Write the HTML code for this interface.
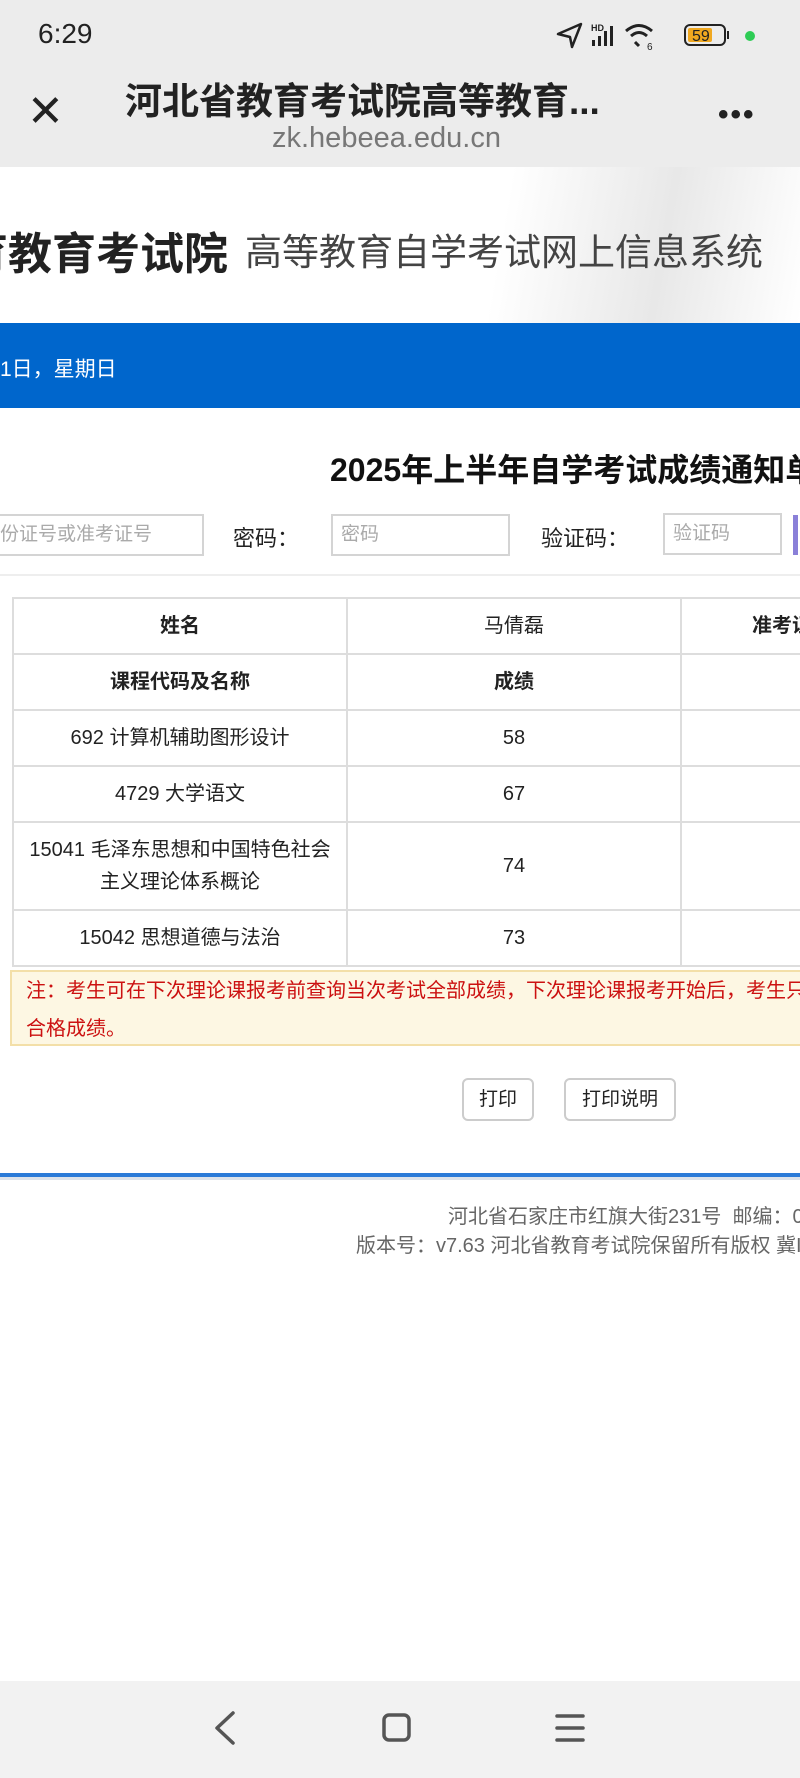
<!DOCTYPE html>
<html><head><meta charset="utf-8"><style>
*{margin:0;padding:0;box-sizing:border-box}
html,body{width:800px;height:1778px;overflow:hidden;background:#fff;font-family:"Liberation Sans","Noto Sans CJK SC",sans-serif;position:relative}
.a{position:absolute;white-space:nowrap}
.top{left:0;top:0;width:800px;height:167px;background:#ececec}
.wrap{position:absolute;left:12px;top:597px;width:1002px;overflow:visible}
.tbl{border-collapse:collapse;font-size:20px;color:#222;table-layout:fixed;width:1002px}
.tbl td{border:2px solid #ddd;text-align:center;width:334px;height:56px;white-space:nowrap;line-height:28px;vertical-align:middle}
.tbl td.b{font-weight:bold}
.inp{border:2px solid #d4d4d4;height:42px;color:#aaa;font-size:19px;line-height:38px;padding-left:8px;background:#fff}
.btn{border:2px solid #ccc;border-radius:6px;height:43px;line-height:39px;text-align:center;font-size:19px;color:#222;background:#fff}
</style></head><body>
<div class="a top"></div>
<div class="a" style="left:38px;top:18px;font-size:28px;color:#222">6:29</div>
<svg class="a" style="left:555px;top:20px" width="200" height="32" viewBox="0 0 200 32">
<path d="M3 14 L26 4 L17 27 L15 17 Z" fill="none" stroke="#222" stroke-width="2.5" stroke-linejoin="round"/>
<text x="36" y="11" font-size="9" font-weight="bold" fill="#222" font-family="Liberation Sans">HD</text>
<rect x="37" y="20" width="3" height="6" fill="#222"/><rect x="43" y="16" width="3" height="10" fill="#222"/><rect x="49" y="11" width="3" height="15" fill="#222"/><rect x="55" y="6" width="3" height="20" fill="#222"/>
<path d="M84 26 L80 22 M76 16 Q84 9 92 16 M71 11 Q84 0 97 11" fill="none" stroke="#222" stroke-width="3"/>
<text x="92" y="30" font-size="10" fill="#222">6</text>
<rect x="130" y="5" width="40" height="20" rx="5" fill="none" stroke="#222" stroke-width="2"/>
<rect x="133" y="8" width="24" height="14" rx="2" fill="#f0a820"/>
<text x="137" y="21" font-size="16" fill="#222" font-family="Liberation Sans">59</text>
<rect x="172" y="11" width="2" height="8" fill="#222"/>
<circle cx="195" cy="16" r="5" fill="#2ecc55"/>
</svg>
<div class="a" style="left:27px;top:92px;font-size:44px;line-height:40px;color:#222;font-weight:300">✕</div>
<div class="a" style="left:125px;top:71px;font-size:37px;font-weight:bold;color:#222">河北省教育考试院高等教育...</div>
<div class="a" style="left:272px;top:122px;font-size:29px;color:#777">zk.hebeea.edu.cn</div>
<div class="a" style="left:718px;top:98px;font-size:30px;letter-spacing:2px;color:#222;font-weight:bold">•••</div>

<div class="a" style="left:0;top:167px;width:800px;height:156px;background:linear-gradient(100deg,#fff 62%,#e8e8e8 82%,#fff 100%)"></div>
<div class="a" style="left:-36px;top:218px;font-size:44px;font-weight:bold;color:#222">育教育考试院</div>
<div class="a" style="left:245px;top:222px;font-size:37px;color:#444">高等教育自学考试网上信息系统</div>

<div class="a" style="left:0;top:323px;width:800px;height:85px;background:#0066cc"></div>
<div class="a" style="left:0;top:353px;font-size:21px;color:#fff">1日，星期日</div>

<div class="a" style="left:330px;top:445px;font-size:32px;font-weight:bold;color:#111">2025年上半年自学考试成绩通知单</div>

<div class="a inp" style="left:-10px;top:514px;width:214px">份证号或准考证号</div>
<div class="a" style="left:233px;top:521px;font-size:22px;color:#222">密码：</div>
<div class="a inp" style="left:331px;top:514px;width:179px">密码</div>
<div class="a" style="left:541px;top:521px;font-size:22px;color:#222">验证码：</div>
<div class="a inp" style="left:663px;top:513px;width:119px">验证码</div>
<div class="a" style="left:793px;top:515px;width:5px;height:40px;background:#8a80d8"></div>
<div class="a" style="left:0;top:574px;width:800px;height:2px;background:#eee"></div>

<div class="wrap"><table class="tbl">
<tr><td class="b">姓名</td><td>马倩磊</td><td class="b" style="text-align:left;padding-left:70px">准考证号</td></tr>
<tr><td class="b">课程代码及名称</td><td class="b">成绩</td><td></td></tr>
<tr><td>692 计算机辅助图形设计</td><td>58</td><td></td></tr>
<tr><td>4729 大学语文</td><td>67</td><td></td></tr>
<tr><td style="height:88px;line-height:32px">15041 毛泽东思想和中国特色社会<br>主义理论体系概论</td><td>74</td><td></td></tr>
<tr><td>15042 思想道德与法治</td><td>73</td><td></td></tr>
</table></div>

<div class="a" style="left:10px;top:970px;width:820px;height:76px;background:#fdf7e3;border:2px solid #f3dfa8"></div>
<div class="a" style="left:26px;top:972px;font-size:20px;line-height:38px;color:#cc1111">注：考生可在下次理论课报考前查询当次考试全部成绩，下次理论课报考开始后，考生只能查询<br>合格成绩。</div>

<div class="a btn" style="left:462px;top:1078px;width:72px">打印</div>
<div class="a btn" style="left:564px;top:1078px;width:112px">打印说明</div>

<div class="a" style="left:0;top:1173px;width:800px;height:4px;background:#2b7bd8"></div>
<div class="a" style="left:0;top:1177px;width:800px;height:3px;background:#dde3ea"></div>
<div class="a" style="left:448px;top:1200px;font-size:20px;color:#666">河北省石家庄市红旗大街231号&nbsp;&nbsp;邮编：050091</div>
<div class="a" style="left:356px;top:1229px;font-size:20px;color:#666">版本号：v7.63 河北省教育考试院保留所有版权 冀ICP备</div>

<div class="a" style="left:0;top:1681px;width:800px;height:97px;background:#f2f2f2"></div>
<svg class="a" style="left:0;top:1700px" width="800" height="56">
<path d="M233 13 L217 28 L233 43" fill="none" stroke="#555" stroke-width="3.5" stroke-linecap="round" stroke-linejoin="round"/>
<rect x="384" y="15" width="25" height="25" rx="5" fill="none" stroke="#555" stroke-width="3.5"/>
<path d="M557 16 H583 M557 28 H583 M557 40 H583" stroke="#555" stroke-width="3.5" stroke-linecap="round"/>
</svg>
</body></html>
